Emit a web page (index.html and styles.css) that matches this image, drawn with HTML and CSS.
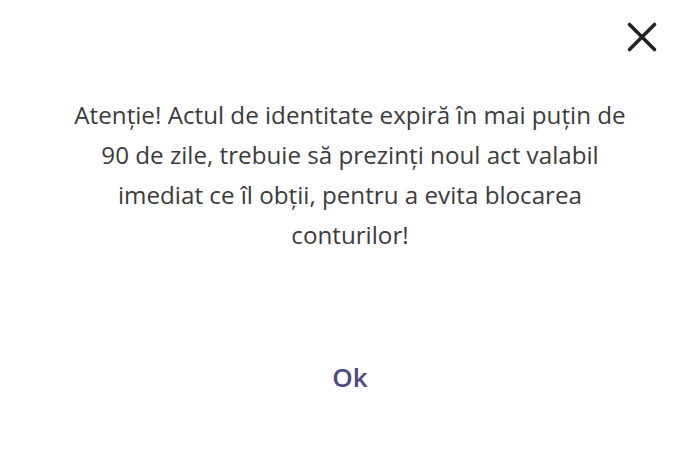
FILE: index.html
```html
<!DOCTYPE html>
<html lang="ro">
<head>
<meta charset="utf-8">
<link rel="stylesheet" href="styles.css">
</head>
<body>
<div class="dialog">
  <div class="top">
    <button class="close" aria-label="Închide">
      <svg width="32" height="32" viewBox="0 0 32 32"><path d="M3.5 3.5 L28.5 28.5 M28.5 3.5 L3.5 28.5" stroke="#222" stroke-width="3.6" stroke-linecap="round" fill="none"/></svg>
    </button>
  </div>
  <p class="message">Atenție! Actul de identitate expiră în mai puțin de<br>90 de zile, trebuie să prezinți noul act valabil<br>imediat ce îl obții, pentru a evita blocarea<br>conturilor!</p>
  <div class="actions">
    <button class="ok">Ok</button>
  </div>
</div>
</body>
</html>
```
FILE: styles.css
```css
* { box-sizing: border-box; }
html, body { margin: 0; padding: 0; background: #fff; }
body { width: 700px; height: 475px; overflow: hidden; font-family: "Open Sans", "Noto Sans", sans-serif; }
.dialog { display: flex; flex-direction: column; align-items: center; }
.top { width: 100%; display: flex; justify-content: flex-end; padding: 21px 42px 0 0; }
.close { border: 0; background: none; padding: 0; width: 32px; height: 32px; display: block; cursor: pointer; }
.close svg { display: block; }
.message { margin: 42px 0 0; width: 620px; text-align: center; font-size: 24.2px; line-height: 40px; color: #3b3b3b; }
.actions { margin-top: 104px; }
.ok { border: 0; background: none; padding: 0; font-family: inherit; font-weight: 600; font-size: 26px; color: #4f4784; cursor: pointer; }
```
